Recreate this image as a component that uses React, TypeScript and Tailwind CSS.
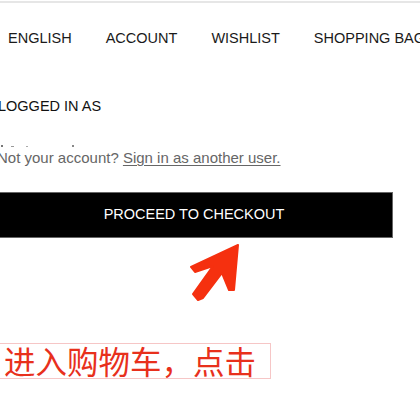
export default function App() {
  return (
    <div className="w-[420px] h-[420px] overflow-hidden bg-white relative" style={{ fontFamily: '"Liberation Sans", Arial, sans-serif' }}>
      <div className="h-[2px] bg-[#e6e6e6] mt-[1px]" />
      <div className="flex gap-[34px] pl-[8px] pt-[25px] text-[14.5px] leading-[20px] text-[#1a1a1a] whitespace-nowrap">
        <span>ENGLISH</span>
        <span>ACCOUNT</span>
        <span>WISHLIST</span>
        <span>SHOPPING BAG</span>
      </div>
      <div className="ml-[-2px] mt-[48px] text-[14.5px] leading-[20px] text-[#111]">LOGGED IN AS</div>
      <div className="flex items-center gap-[8px] mt-[28px] h-[4px] ml-[1px]">
        <span className="w-[2px] h-[2px] bg-[#777]" />
        <span className="w-[3px] h-[1px] bg-[#999]" />
        <span className="w-[2px] h-[1px] bg-[#aaa] ml-[4px]" />
        <span className="w-[2px] h-[2px] bg-[#888] ml-[36px]" />
      </div>
      <div className="ml-[-3px] mt-0 text-[15px] leading-[20px] text-[#666] whitespace-nowrap">
        Not your account? <span className="underline underline-offset-2">Sign in as another user.</span>
      </div>
      <div className="mt-[24px] w-[393px] h-[46px] bg-black border border-[#666] border-l-0 flex items-center justify-center text-white text-[14.5px]">
        <span className="mr-[4px]">PROCEED TO CHECKOUT</span>
      </div>
      <svg className="absolute left-[180px] top-[235px]" width="70" height="75" viewBox="180 235 70 75">
        <path
          d="M238 245 L191 267 L195 272 L213 266 L193 294 L198 300 L203 298 L222 273 L229 290 L234 290 Z"
          fill="#f5300f"
          stroke="#f5300f"
          strokeWidth="2"
          strokeLinejoin="round"
        />
      </svg>
      <div className="absolute left-0 top-[343px] w-[271px] h-[36px] border border-[#f6c6c6] border-l-0 flex items-center">
        <span
          className="pl-[4px] text-[31.5px] leading-none text-[#e8301c] whitespace-nowrap"
          style={{ fontFamily: '"Noto Sans CJK SC", sans-serif' }}
        >
          进入购物车，点击
        </span>
      </div>
    </div>
  );
}
